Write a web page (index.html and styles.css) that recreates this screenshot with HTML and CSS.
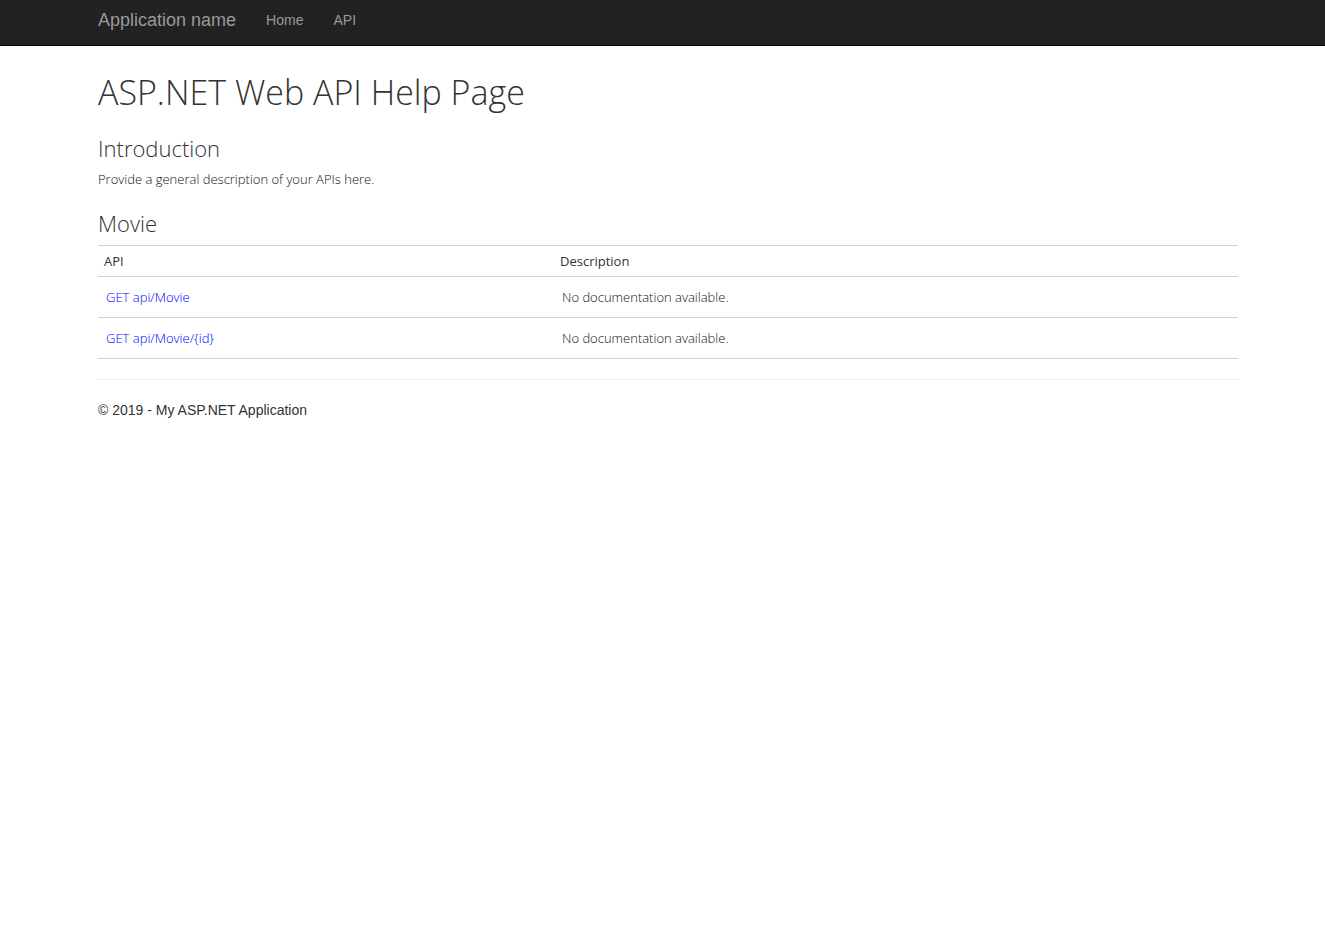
FILE: index.html
```html
<!DOCTYPE html>
<html lang="en">
<head>
<meta charset="utf-8">
<title>ASP.NET Web API Help Page</title>
<link rel="stylesheet" href="styles.css">
</head>
<body>
<header class="navbar">
  <a class="brand" href="#">Application name</a>
  <nav class="nav">
    <a href="#">Home</a>
    <a href="#">API</a>
  </nav>
</header>
<div class="container">
  <main class="help-page">
    <h1>ASP.NET Web API Help Page</h1>
    <h2>Introduction</h2>
    <p class="intro">Provide a general description of your APIs here.</p>
    <h2>Movie</h2>
    <table class="api-table">
      <thead>
        <tr><th scope="col">API</th><th scope="col">Description</th></tr>
      </thead>
      <tbody>
        <tr><td><a href="#">GET api/Movie</a></td><td>No documentation available.</td></tr>
        <tr><td><a href="#">GET api/Movie/{id}</a></td><td>No documentation available.</td></tr>
      </tbody>
    </table>
  </main>
  <footer class="footer">© 2019 - My ASP.NET Application</footer>
</div>
</body>
</html>
```
FILE: styles.css
```css
* { box-sizing: border-box; }

body {
  margin: 0;
  background: #fff;
  color: #333;
  font: 14px/20px "Liberation Sans", Arial, sans-serif;
}

.navbar {
  display: flex;
  height: 46px;
  padding: 10px 87px 0 98px;
  background: #222;
  border-bottom: 1px solid #080808;
}

.navbar a {
  color: #999;
  text-decoration: none;
}

.brand { font-size: 18px; }

.nav {
  display: flex;
  gap: 30px;
  margin-left: 30px;
}

.container { padding: 0 87px 0 98px; }

.help-page {
  padding-top: 24px;
  font-family: "Open Sans", "Segoe UI", sans-serif;
  font-size: 13px;
  font-weight: 300;
}

h1, h2 {
  margin: 0;
  font-weight: 300;
}

h1 {
  margin-bottom: 20px;
  font-size: 34px;
  line-height: 44px;
}

h2 {
  font-size: 22px;
  line-height: 28px;
}

.intro {
  margin: 7px 0 20px;
  color: #111;
}

.api-table {
  width: 100%;
  margin-top: 8px;
  border-collapse: collapse;
  table-layout: fixed;
}

.api-table th, .api-table td {
  border-top: 1px solid #d3d3d3;
  border-bottom: 1px solid #d3d3d3;
  text-align: left;
}

.api-table th {
  padding: 5px 6px;
  font-weight: 400;
}

.api-table th:first-child { width: 40%; }

.api-table td {
  padding: 10px 8px;
  color: #111;
}

.api-table a {
  color: #00f;
  text-decoration: none;
}

.footer {
  margin-top: 20px;
  padding-top: 20px;
  border-top: 1px solid #eee;
}
```
